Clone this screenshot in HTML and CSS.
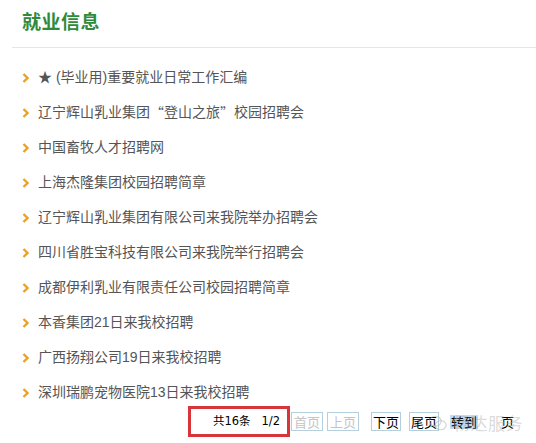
FILE: index.html
```html
<!DOCTYPE html>
<html lang="zh-CN">
<head>
    <meta charset="UTF-8">
    <meta name="viewport" content="width=device-width, initial-scale=1.0">
    <title>就业信息</title>
    <link rel="stylesheet" href="styles.css">
</head>
<body>
    <div class="page">
        <div class="news-head">
            <h2 class="news-title">就业信息</h2>
        </div>
        <ul class="news-list">
            <li><svg class="arrow" viewBox="0 0 7 10"><polyline points="1.5,1 5.5,5 1.5,9"/></svg>★ (毕业用)重要就业日常工作汇编</li>
            <li><svg class="arrow" viewBox="0 0 7 10"><polyline points="1.5,1 5.5,5 1.5,9"/></svg>辽宁辉山乳业集团<span class="cjk">“</span>登山之旅<span class="cjk">”</span>校园招聘会</li>
            <li><svg class="arrow" viewBox="0 0 7 10"><polyline points="1.5,1 5.5,5 1.5,9"/></svg>中国畜牧人才招聘网</li>
            <li><svg class="arrow" viewBox="0 0 7 10"><polyline points="1.5,1 5.5,5 1.5,9"/></svg>上海杰隆集团校园招聘简章</li>
            <li><svg class="arrow" viewBox="0 0 7 10"><polyline points="1.5,1 5.5,5 1.5,9"/></svg>辽宁辉山乳业集团有限公司来我院举办招聘会</li>
            <li><svg class="arrow" viewBox="0 0 7 10"><polyline points="1.5,1 5.5,5 1.5,9"/></svg>四川省胜宝科技有限公司来我院举行招聘会</li>
            <li><svg class="arrow" viewBox="0 0 7 10"><polyline points="1.5,1 5.5,5 1.5,9"/></svg>成都伊利乳业有限责任公司校园招聘简章</li>
            <li><svg class="arrow" viewBox="0 0 7 10"><polyline points="1.5,1 5.5,5 1.5,9"/></svg>本香集团21日来我校招聘</li>
            <li><svg class="arrow" viewBox="0 0 7 10"><polyline points="1.5,1 5.5,5 1.5,9"/></svg>广西扬翔公司19日来我校招聘</li>
            <li><svg class="arrow" viewBox="0 0 7 10"><polyline points="1.5,1 5.5,5 1.5,9"/></svg>深圳瑞鹏宠物医院13日来我校招聘</li>
        </ul>
        <div class="pager">
            <div class="pager-count">共16条&nbsp;&nbsp;&nbsp;1/2</div>
            <span class="pg-btn disabled first">首页</span>
            <span class="pg-btn disabled">上页</span>
            <span class="pg-btn next">下页</span>
            <span class="pg-btn last">尾页</span>
            <span class="pg-goto">转到</span>
            <span class="pg-input"></span>
            <span class="pg-unit">页</span>
        </div>
        <div class="watermark">
            <svg class="wm-icon" viewBox="0 0 22 20">
                <ellipse cx="8" cy="8" rx="6.5" ry="5.5"/>
                <ellipse cx="14" cy="12.5" rx="6" ry="5"/>
            </svg>
            <span>畅达服务</span>
        </div>
    </div>
</body>
</html>
```

FILE: styles.css
```css
body {
    margin: 0;
    background: #fff;
    font-family: "Liberation Sans", "Noto Sans CJK SC", sans-serif;
}
.page {
    position: relative;
    width: 536px;
    height: 443px;
    overflow: hidden;
}
.news-head {
    margin-left: 12px;
    height: 47px;
    padding-left: 10px;
    border-bottom: 1px solid #e6e6e6;
}
.news-title {
    margin: 0;
    padding-top: 10px;
    font-size: 19px;
    line-height: 26px;
    font-weight: bold;
    color: #2e8b3c;
    letter-spacing: 0.5px;
}
.news-list {
    list-style: none;
    margin: 0;
    padding: 12px 0 0 22px;
}
.news-list li {
    height: 35px;
    line-height: 35px;
    font-size: 14px;
    color: #555;
    display: flex;
    align-items: center;
}
.cjk {
    font-family: "Noto Sans CJK SC", sans-serif;
}
.arrow {
    width: 7px;
    height: 10px;
    margin-right: 9px;
    flex-shrink: 0;
}
.arrow polyline {
    fill: none;
    stroke: #eba125;
    stroke-width: 2.4;
}
.pager {
    display: flex;
    align-items: center;
    margin: -4px 0 0 188px;
    font-family: "Noto Sans CJK SC", sans-serif;
    font-size: 12px;
    color: #000;
}
.pager-count {
    box-sizing: border-box;
    width: 102px;
    height: 31px;
    border: 3px solid #d8353b;
    padding-right: 7px;
    text-align: right;
    line-height: 25px;
    font-family: "DejaVu Sans", "Noto Sans CJK SC", sans-serif;
    font-size: 11.5px;
}
.pg-btn {
    box-sizing: border-box;
    height: 19px;
    line-height: 17px;
    padding: 0 1px;
    margin-left: 4px;
    border: 1px solid #b4cfdd;
    font-size: 13px;
}
.pg-btn.first {
    margin-left: 1px;
}
.pg-btn.next {
    margin-left: 12px;
}
.pg-btn.last {
    margin-left: 8px;
}
.pg-btn.disabled {
    color: #c4c4c4;
    padding: 0 2px;
}
.pg-goto {
    margin-left: 11px;
    height: 14px;
    line-height: 14px;
    background: #c3daf3;
    font-size: 13px;
    padding: 0 1px;
}
.pg-input {
    width: 23px;
}
.pg-unit {
    font-size: 13px;
}
.watermark {
    position: absolute;
    left: 428px;
    top: 410px;
    display: flex;
    align-items: center;
    color: rgba(160, 160, 160, 0.4);
    font-size: 17px;
    letter-spacing: 0.5px;
    pointer-events: none;
}
.wm-icon {
    width: 20px;
    height: 18px;
    margin-right: 5px;
}
.wm-icon ellipse {
    fill: none;
    stroke: rgba(160, 160, 160, 0.45);
    stroke-width: 1.3;
}
```
